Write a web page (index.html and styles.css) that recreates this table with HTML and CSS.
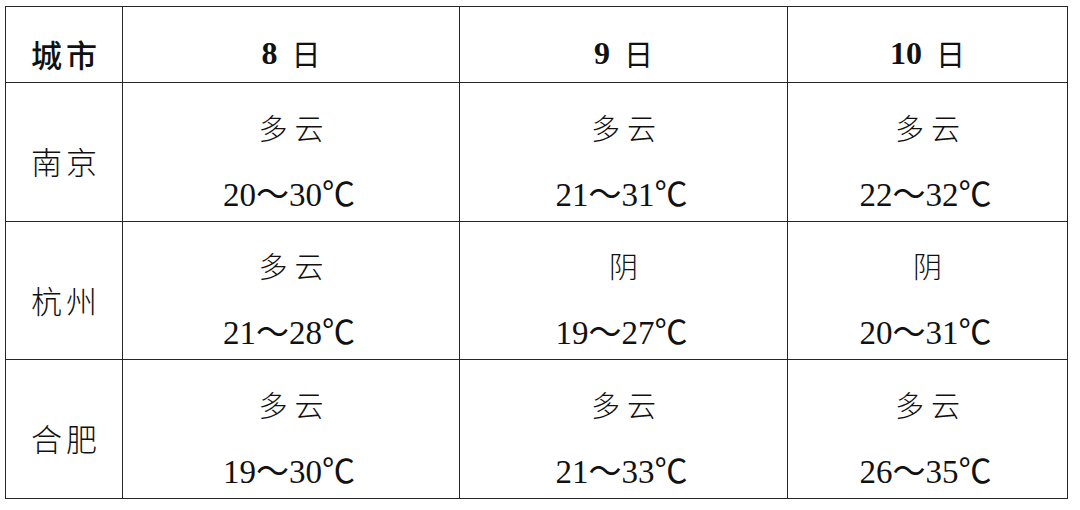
FILE: index.html
```html
<!DOCTYPE html>
<html lang="zh">
<head>
<meta charset="utf-8">
<link rel="stylesheet" href="styles.css">
</head>
<body>
<div class="table">
  <div class="cell head city">城市</div>
  <div class="cell head"><span class="num">8</span><span class="day">日</span></div>
  <div class="cell head"><span class="num">9</span><span class="day">日</span></div>
  <div class="cell head"><span class="num">10</span><span class="day">日</span></div>

  <div class="cell city">南京</div>
  <div class="cell data"><div class="wx">多云</div><div class="temp">20～30℃</div></div>
  <div class="cell data"><div class="wx">多云</div><div class="temp">21～31℃</div></div>
  <div class="cell data"><div class="wx">多云</div><div class="temp">22～32℃</div></div>

  <div class="cell city">杭州</div>
  <div class="cell data"><div class="wx">多云</div><div class="temp">21～28℃</div></div>
  <div class="cell data"><div class="wx">阴</div><div class="temp">19～27℃</div></div>
  <div class="cell data"><div class="wx">阴</div><div class="temp">20～31℃</div></div>

  <div class="cell city">合肥</div>
  <div class="cell data"><div class="wx">多云</div><div class="temp">19～30℃</div></div>
  <div class="cell data"><div class="wx">多云</div><div class="temp">21～33℃</div></div>
  <div class="cell data"><div class="wx">多云</div><div class="temp">26～35℃</div></div>
</div>
</body>
</html>
```

FILE: styles.css
```css
html, body {
  margin: 0;
  padding: 0;
  background: #ffffff;
}
body {
  font-family: "Liberation Serif", "Noto Sans CJK SC", serif;
  color: #111111;
}
.table {
  margin: 6px 0 0 5px;
  width: 1063px;
  display: grid;
  grid-template-columns: 116px 336px 327px 279px;
  grid-template-rows: 75px 138px 137px 138px;
  gap: 1px;
  padding: 1px;
  background: #262626;
  box-sizing: border-box;
}
.cell {
  background: #ffffff;
  display: flex;
  flex-direction: column;
  align-items: center;
  justify-content: center;
  padding-top: 17px;
  box-sizing: border-box;
}
.head {
  font-size: 32px;
  flex-direction: row;
}
.head .num {
  font-family: "Liberation Serif", serif;
  font-weight: 700;
  margin-right: 14px;
}
.head .day {
  font-family: "Noto Sans CJK SC", sans-serif;
  font-weight: 400;
  font-size: 29px;
}
.city {
  font-family: "Noto Sans CJK SC", sans-serif;
  font-weight: 300;
  font-size: 31px;
  letter-spacing: 4px;
  padding-left: 4px;
}
.head.city {
  font-weight: 500;
}
.data {
  gap: 28px;
}
.wx {
  font-family: "Noto Sans CJK SC", sans-serif;
  font-size: 29px;
  letter-spacing: 7px;
  padding-left: 7px;
  line-height: 40px;
  font-weight: 300;
}
.temp {
  font-family: "Liberation Serif", "Noto Sans CJK SC", serif;
  font-size: 33px;
  line-height: 40px;
  padding-right: 4px;
}
```
